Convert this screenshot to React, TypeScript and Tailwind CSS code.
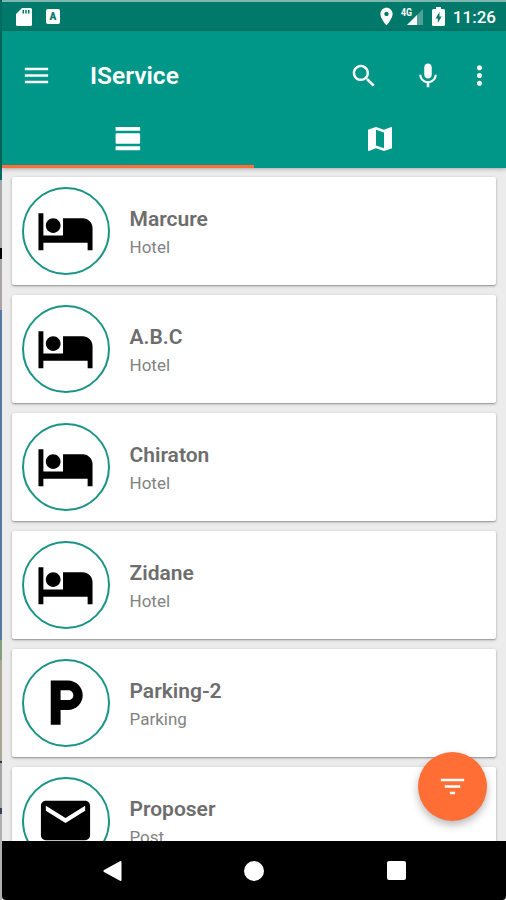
import React from 'react';

const ICONS = {
  menu: 'M3 18h18v-2H3v2zm0-5h18v-2H3v2zm0-7v2h18V6H3z',
  search: 'M15.5 14h-.79l-.28-.27C15.41 12.59 16 11.11 16 9.5 16 5.91 13.09 3 9.5 3S3 5.91 3 9.5 5.91 16 9.5 16c1.61 0 3.09-.59 4.23-1.57l.27.28v.79l5 4.99L20.49 19l-4.99-5zm-6 0C7.01 14 5 11.99 5 9.5S7.01 5 9.5 5 14 7.01 14 9.5 11.99 14 9.5 14z',
  mic: 'M12 14c1.66 0 2.99-1.34 2.99-3L15 5c0-1.66-1.34-3-3-3S9 3.34 9 5v6c0 1.66 1.34 3 3 3zm5.3-3c0 3-2.54 5.1-5.3 5.1S6.7 14 6.7 11H5c0 3.41 2.72 6.23 6 6.72V21h2v-3.28c3.28-.48 6-3.3 6-6.72h-1.7z',
  more: 'M12 8c1.1 0 2-.9 2-2s-.9-2-2-2-2 .9-2 2 .9 2 2 2zm0 2c-1.1 0-2 .9-2 2s.9 2 2 2 2-.9 2-2-.9-2-2-2zm0 6c-1.1 0-2 .9-2 2s.9 2 2 2 2-.9 2-2-.9-2-2-2z',
  list: 'M2 21h19v-3H2v3zM20 8H3c-.55 0-1 .45-1 1v6c0 .55.45 1 1 1h17c.55 0 1-.45 1-1V9c0-.55-.45-1-1-1zM2 3v3h19V3H2z',
  map: 'M20.5 3l-.16.03L15 5.1 9 3 3.36 4.9c-.21.07-.36.25-.36.48V20.5c0 .28.22.5.5.5l.16-.03L9 18.9l6 2.1 5.64-1.9c.21-.07.36-.25.36-.48V3.5c0-.28-.22-.5-.5-.5zM15 19l-6-2.11V5l6 2.11V19z',
  filter: 'M10 18h4v-2h-4v2zM3 6v2h18V6H3zm3 7h12v-2H6v2z',
  hotel: 'M7 13c1.66 0 3-1.34 3-3S8.66 7 7 7s-3 1.34-3 3 1.34 3 3 3zm12-6h-8v7H3V5H1v15h2v-3h18v3h2v-9c0-2.21-1.79-4-4-4z',
  parking: 'M13 3H6v18h4v-6h3c3.31 0 6-2.69 6-6s-2.69-6-6-6zm.2 8H10V7h3.2c1.1 0 2 .9 2 2s-.9 2-2 2z',
  mail: 'M20 4H4c-1.1 0-1.99.9-1.99 2L2 18c0 1.1.9 2 2 2h16c1.1 0 2-.9 2-2V6c0-1.1-.9-2-2-2zm0 4l-8 5-8-5V6l8 5 8-5v2z',
  place: 'M12 2C8.13 2 5 5.13 5 9c0 5.25 7 13 7 13s7-7.75 7-13c0-3.87-3.13-7-7-7zm0 9.5c-1.38 0-2.5-1.12-2.5-2.5s1.12-2.5 2.5-2.5 2.5 1.12 2.5 2.5-1.12 2.5-2.5 2.5z',
};

type IconName = keyof typeof ICONS;

const Icon: React.FC<{ name: IconName; className?: string }> = ({ name, className }) => (
  <svg viewBox="0 0 24 24" fill="currentColor" className={`shrink-0 ${className ?? ''}`}>
    <path d={ICONS[name]} />
  </svg>
);

interface Service {
  name: string;
  type: string;
  icon: IconName;
}

const SERVICES: Service[] = [
  { name: 'Marcure', type: 'Hotel', icon: 'hotel' },
  { name: 'A.B.C', type: 'Hotel', icon: 'hotel' },
  { name: 'Chiraton', type: 'Hotel', icon: 'hotel' },
  { name: 'Zidane', type: 'Hotel', icon: 'hotel' },
  { name: 'Parking-2', type: 'Parking', icon: 'parking' },
  { name: 'Proposer', type: 'Post', icon: 'mail' },
];

const StatusBar: React.FC = () => (
  <div className="flex h-[29px] shrink-0 items-center bg-[#00796b] pr-[10px] pl-[14px]">
    <svg viewBox="0 0 16 18" className="h-[18px] w-[16px]" fill="#fff">
      <path fillRule="evenodd" d="M6 0h8.5Q16 0 16 1.5v15q0 1.5-1.5 1.5h-13Q0 18 0 16.5V6zM6.5 2v3.5H8V2zM9.2 2v3.5h1.5V2zM12 2v3.5h1.5V2z" />
    </svg>
    <div className="ml-[14px] flex h-[15px] w-[14px] items-center justify-center rounded-[2px] bg-white text-[10px] leading-none font-black text-[#00796b]">
      A
    </div>
    <div className="ml-auto flex items-center">
      <Icon name="place" className="h-[21px] w-[21px]" />
      <svg viewBox="0 0 22 18" className="ml-[4px] h-[18px] w-[22px]">
        <path d="M22 1v16H6z" fill="#fff" fillOpacity=".3" />
        <path d="M16 7v10H6z" fill="#fff" />
        <text x="0" y="8" fill="#fff" fontSize="10.5" fontWeight="700" textLength="11" lengthAdjust="spacingAndGlyphs">4G</text>
      </svg>
      <svg viewBox="0 0 13 19" className="ml-[9px] h-[19px] w-[13px]" fill="#fff">
        <path fillRule="evenodd" d="M4 0h5v2h2.5Q13 2 13 3.500v14q0 1.500-1.500 1.500h-10Q0 19 0 17.500v-14Q0 2 1.500 2H4zM7.500 5l-4 6.500h2.300V16l3.900-6.500H7.500z" />
      </svg>
      <span className="ml-[8px] pt-px text-[17px] leading-none font-medium">11:26</span>
    </div>
  </div>
);

const ServiceCard: React.FC<{ service: Service }> = ({ service }) => (
  <div className="flex h-[107.5px] shrink-0 items-start rounded-[2px] bg-white pt-[9.5px] pl-[9.5px] shadow-[0_1px_3px_rgba(0,0,0,0.3),0_1px_1px_rgba(0,0,0,0.15)]">
    <div className="flex h-[88px] w-[88px] shrink-0 items-center justify-center rounded-full border-2 border-[#1a9485] text-black">
      <Icon name={service.icon} className="h-[59px] w-[59px]" />
    </div>
    <div className="ml-[20px] pt-[18px]">
      <h2 className="text-[21px] leading-[28px] font-semibold text-[#6d6d6d]">{service.name}</h2>
      <p className="pt-[2px] text-[17px] leading-[24px] text-[#828282]">{service.type}</p>
    </div>
  </div>
);

const App: React.FC = () => {
  return (
    <div className="flex h-[900px] w-[506px] overflow-hidden bg-[#b0b0b0] font-['Roboto',sans-serif]">
      {/* Sliver of the desktop behind the device */}
      <div className="flex w-[2px] shrink-0 flex-col">
        <div className="h-[180px] bg-[#006b60]" />
        <div className="h-[68px] bg-[#a8a8a8]" />
        <div className="h-[11px] bg-black" />
        <div className="h-[51px] bg-[#a9a5a5]" />
        <div className="h-[330px] bg-[#5878a5]" />
        <div className="h-[20px] bg-[#80a078]" />
        <div className="h-[101px] bg-[#a8a595]" />
        <div className="h-[2px] bg-[#333333]" />
        <div className="h-[45px] bg-[#a5a5a5]" />
        <div className="h-[6px] bg-[#35435a]" />
      </div>

      <div className="relative flex min-w-0 flex-1 flex-col bg-[#ececec] text-white">
        <div className="h-[2px] shrink-0 bg-[#7db8b0]" />
        <StatusBar />

        <header className="z-10 flex h-[137px] shrink-0 flex-col bg-[#009688] shadow-[0_1px_4px_rgba(0,0,0,0.3)]">
          <div className="flex h-[89px] items-center pr-[11px] pl-[19px]">
            <Icon name="menu" className="h-[31px] w-[31px]" />
            <h1 className="ml-[38px] pt-[2px] text-[24.5px] leading-none font-semibold">IService</h1>
            <div className="ml-auto flex items-center">
              <Icon name="search" className="h-[30px] w-[30px]" />
              <Icon name="mic" className="ml-[34px] h-[30px] w-[30px]" />
              <Icon name="more" className="ml-[21px] h-[31px] w-[31px]" />
            </div>
          </div>
          <div className="flex flex-1">
            <button className="flex w-1/2 justify-center border-b-[3px] border-[#ff6e38]">
              <Icon name="list" className="mt-[3px] h-[31px] w-[31px]" />
            </button>
            <button className="flex w-1/2 justify-center">
              <Icon name="map" className="mt-[3px] h-[32px] w-[32px]" />
            </button>
          </div>
        </header>

        <main className="flex min-h-0 flex-1 flex-col gap-[10.5px] overflow-hidden px-[10px] pt-[9px]">
          {SERVICES.map((service) => (
            <ServiceCard key={service.name} service={service} />
          ))}
        </main>

        <button className="absolute right-[19px] bottom-[79px] flex h-[69px] w-[69px] items-center justify-center rounded-full bg-[#ff6e35] shadow-[0_4px_8px_rgba(0,0,0,0.28)]">
          <Icon name="filter" className="h-[31px] w-[31px]" />
        </button>

        <nav className="z-10 flex h-[59px] shrink-0 items-center justify-between rounded-b-[4px] bg-black pr-[100px] pl-[100px]">
          <svg viewBox="0 0 20 22" className="h-[22px] w-[20px]" fill="#fff">
            <path d="M18 1.2Q19.5.5 19.5 2v18q0 1.5-1.5.8L2 12Q.5 11 2 10z" />
          </svg>
          <div className="mr-px h-[20px] w-[20px] rounded-full bg-white" />
          <div className="h-[19px] w-[19px] rounded-[2px] bg-white" />
        </nav>
      </div>
    </div>
  );
};

export default App;
